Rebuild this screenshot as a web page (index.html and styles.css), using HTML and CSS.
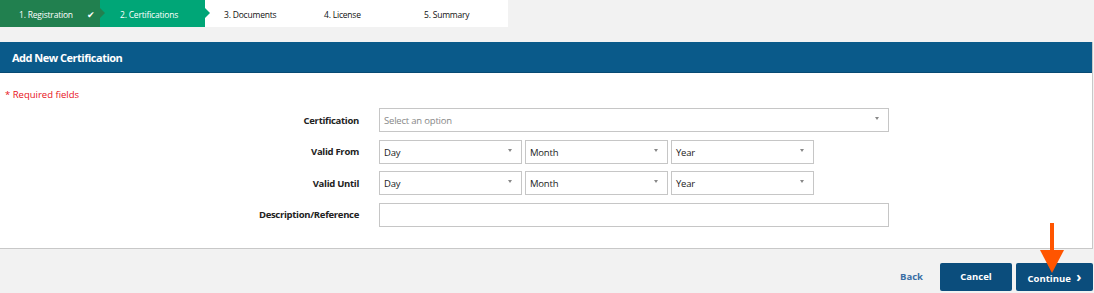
FILE: index.html
```html
<!DOCTYPE html>
<html lang="en">
<head>
    <meta charset="UTF-8">
    <meta name="viewport" content="width=device-width, initial-scale=1.0">
    <title>Add New Certification</title>
    <link rel="stylesheet" href="styles.css">
</head>
<body>
    <nav class="steps">
        <div class="step done">1. Registration <span class="tick">&#10004;</span></div>
        <div class="step current">2. Certifications</div>
        <div class="step">3. Documents</div>
        <div class="step">4. License</div>
        <div class="step">5. Summary</div>
    </nav>

    <div class="panel">
        <div class="panel-head">Add New Certification</div>
        <div class="panel-body">
            <p class="required">* Required fields</p>

            <div class="form">
                <label class="label">Certification</label>
                <div class="select placeholder">Select an option</div>

                <label class="label">Valid From</label>
                <div class="dates">
                    <div class="select">Day</div>
                    <div class="select">Month</div>
                    <div class="select">Year</div>
                </div>

                <label class="label">Valid Until</label>
                <div class="dates">
                    <div class="select">Day</div>
                    <div class="select">Month</div>
                    <div class="select">Year</div>
                </div>

                <label class="label">Description/Reference</label>
                <div class="input"></div>
            </div>
        </div>
    </div>

    <div class="actions">
        <a class="back" href="#">Back</a>
        <button class="btn cancel">Cancel</button>
        <button class="btn next">Continue <span class="chev">&#8250;</span></button>
        <svg class="pointer" width="26" height="50" viewBox="0 0 26 50">
            <rect x="11" y="0" width="4" height="30" fill="#ff5500"/>
            <polygon points="1,27 25,27 13,50" fill="#ff5500"/>
        </svg>
    </div>
</body>
</html>
```

FILE: styles.css
```css
body {
    margin: 0;
    background: #f2f2f2;
    font-family: 'Open Sans', 'Noto Sans', sans-serif;
    font-size: 10px;
    color: #222;
}
.steps {
    display: flex;
    width: 508px;
    height: 27px;
    background: white;
}
.step {
    position: relative;
    width: 100px;
    padding-left: 19px;
    box-sizing: border-box;
    line-height: 30px;
    font-size: 8.5px;
    letter-spacing: -0.2px;
    white-space: nowrap;
    color: #111;
}
.step.done {
    background: #21804f;
    color: white;
}
.step.current {
    width: 105px;
    padding-left: 20px;
    background: #00a677;
    color: white;
}
.step.done::after,
.step.current::after {
    content: "";
    position: absolute;
    top: 8px;
    right: -5px;
    border-top: 5px solid transparent;
    border-bottom: 5px solid transparent;
    border-left: 5px solid #21804f;
    z-index: 1;
}
.step.current::after {
    border-left-color: #00a677;
}
.tick {
    margin-left: 12px;
    font-size: 9px;
}
.panel {
    margin-top: 15px;
    width: 1093px;
    background: white;
    border-right: 1px solid #c8c8c8;
    border-bottom: 1px solid #c8c8c8;
    box-sizing: border-box;
}
.panel-head {
    height: 30px;
    line-height: 31px;
    padding-left: 12px;
    background: #0a5a8a;
    border-bottom: 1px solid #074a73;
    color: white;
    font-weight: bold;
    font-size: 11px;
    letter-spacing: -0.5px;
}
.panel-body {
    padding: 15px 0 21px;
}
.required {
    margin: 0 0 7px 5px;
    color: #e8101a;
    font-size: 9.5px;
}
.form {
    display: grid;
    grid-template-columns: 359px 510px;
    column-gap: 20px;
    row-gap: 7.5px;
    align-items: center;
}
.label {
    text-align: right;
    font-weight: bold;
    font-size: 9.5px;
    letter-spacing: -0.3px;
}
.select,
.input {
    position: relative;
    height: 24px;
    line-height: 24px;
    padding-left: 4px;
    border: 1px solid #c6c6c6;
    box-sizing: border-box;
    background: white;
    font-size: 9.5px;
    letter-spacing: -0.2px;
}
.select::after {
    content: "";
    position: absolute;
    top: 8px;
    right: 9px;
    border-left: 2.5px solid transparent;
    border-right: 2.5px solid transparent;
    border-top: 3px solid #888;
}
.placeholder {
    color: #888;
}
.dates {
    display: flex;
    gap: 3px;
}
.dates .select {
    width: 143px;
}
.actions {
    position: relative;
    display: flex;
    justify-content: flex-end;
    align-items: center;
    gap: 4px;
    padding: 14px 1px 0 0;
}
.back {
    margin-right: 13px;
    color: #3a6ea5;
    font-weight: bold;
    font-size: 9.5px;
    text-decoration: none;
}
.btn {
    height: 28px;
    padding: 0;
    background: #0b4d7c;
    color: white;
    border: none;
    border-radius: 2px;
    font-family: inherit;
    font-weight: bold;
    font-size: 9.5px;
}
.cancel {
    width: 72px;
}
.next {
    width: 77px;
}
.chev {
    margin-left: 3px;
    font-size: 14px;
}
.pointer {
    position: absolute;
    right: 29px;
    top: -26px;
}
```
